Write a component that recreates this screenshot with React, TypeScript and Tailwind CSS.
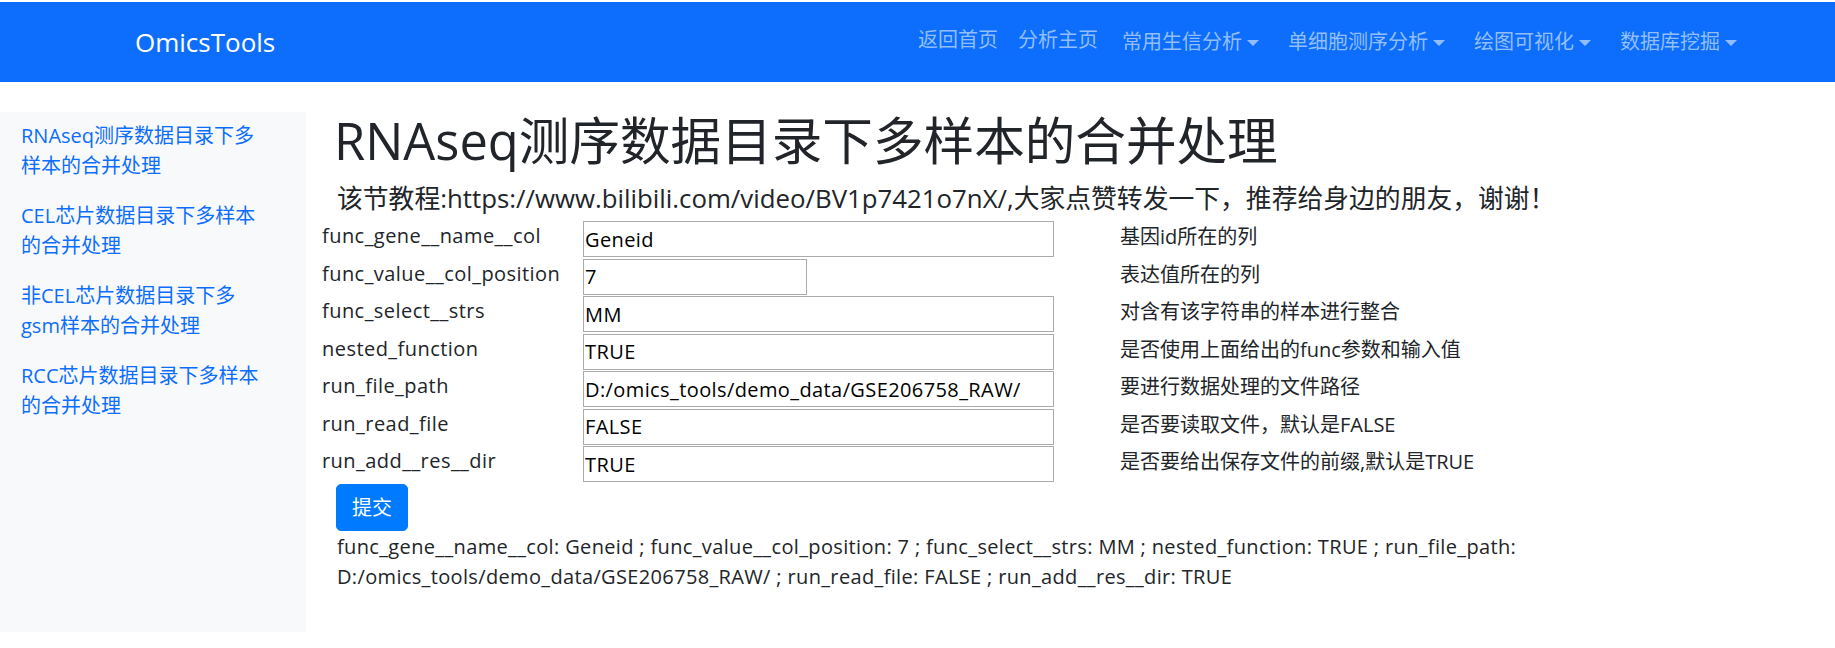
const FONT = "font-['Open_Sans','Noto_Sans_CJK_SC',sans-serif]";

const sideLinks = [
  "RNAseq测序数据目录下多样本的合并处理",
  "CEL芯片数据目录下多样本的合并处理",
  "非CEL芯片数据目录下多gsm样本的合并处理",
  "RCC芯片数据目录下多样本的合并处理",
];

const params = [
  { name: "func_gene__name__col", value: "Geneid", note: "基因id所在的列", short: false },
  { name: "func_value__col_position", value: "7", note: "表达值所在的列", short: true },
  { name: "func_select__strs", value: "MM", note: "对含有该字符串的样本进行整合", short: false },
  { name: "nested_function", value: "TRUE", note: "是否使用上面给出的func参数和输入值", short: false },
  { name: "run_file_path", value: "D:/omics_tools/demo_data/GSE206758_RAW/", note: "要进行数据处理的文件路径", short: false },
  { name: "run_read_file", value: "FALSE", note: "是否要读取文件，默认是FALSE", short: false },
  { name: "run_add__res__dir", value: "TRUE", note: "是否要给出保存文件的前缀,默认是TRUE", short: false },
];

function Caret() {
  return (
    <span className="ml-[5px] inline-block h-0 w-0 border-x-[6px] border-t-[6px] border-x-transparent border-t-[#92befe] align-[3px]" />
  );
}

function NavBar() {
  const drops = ["常用生信分析", "单细胞测序分析", "绘图可视化", "数据库挖掘"];
  return (
    <nav className="mt-[2px] flex h-[80px] items-center bg-[#0d6efd]">
      <a className="ml-[135px] text-[26px] leading-[30px] text-white">OmicsTools</a>
      <div className="ml-auto mr-[98px] flex items-center text-[20px] leading-[30px] text-[#92befe]">
        <a className="mb-[5px]">返回首页</a>
        <a className="mb-[5px] ml-[20px]">分析主页</a>
        {drops.map((d, i) => (
          <a key={d} className={i === 0 ? "ml-[24px]" : "ml-[29px]"}>
            {d}
            <Caret />
          </a>
        ))}
      </div>
    </nav>
  );
}

function SideBar() {
  return (
    <aside className="h-[520px] w-[306px] shrink-0 bg-[#f8f9fa] pl-[21px] pt-[9px]">
      <ul className="flex w-[244px] flex-col gap-[20px]">
        {sideLinks.map((l) => (
          <li key={l}>
            <a className="text-[20px] leading-[30px] text-[#0d6efd]">{l}</a>
          </li>
        ))}
      </ul>
    </aside>
  );
}

export default function App() {
  const summary = params.map((p) => `${p.name}: ${p.value}`).join(" ; ");
  return (
    <div className={`min-h-[648px] bg-white text-[#212529] ${FONT}`}>
      <NavBar />
      <div className="mt-[30px] flex">
        <SideBar />
        <main className="flex-1 pl-[16px] pr-[40px]">
          <h1 className="ml-[12px] mt-[-1px] text-[50.6px] font-normal leading-[60px]">
            RNAseq测序数据目录下多样本的合并处理
          </h1>
          <p className="ml-[15px] mt-[10px] text-[25.8px] leading-[34px]">
            该节教程:https://www.bilibili.com/video/BV1p7421o7nX/,大家点赞转发一下，推荐给身边的朋友，谢谢！
          </p>
          <div className="mt-[6px] grid grid-cols-[261px_471px_1fr] gap-y-[1.5px] text-[20px]">
            {params.map((p) => (
              <div key={p.name} className="contents">
                <span className="leading-[30px] tracking-[0.45px]">{p.name}</span>
                <div>
                  <input
                    defaultValue={p.value}
                    className={`h-[36px] border border-[#ababab] px-[1px] text-[20px] tracking-[0.4px] text-black outline-none ${
                      p.short ? "w-[224px]" : "w-[471px]"
                    }`}
                  />
                </div>
                <span className="pl-[66px] pt-[1px] leading-[30px]">{p.note}</span>
              </div>
            ))}
          </div>
          <button className="ml-[14px] mt-[2px] rounded-[5px] border border-[#007bff] bg-[#007bff] px-[15px] py-[7.5px] text-[20px] leading-[30px] text-white">
            提交
          </button>
          <p className="ml-[15px] mt-[1px] text-[20px] leading-[30px] tracking-[0.35px]">{summary}</p>
        </main>
      </div>
    </div>
  );
}
